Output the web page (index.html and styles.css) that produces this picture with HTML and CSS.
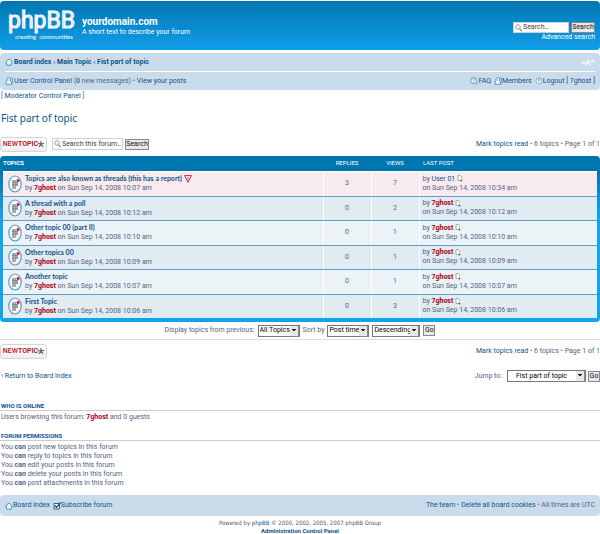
FILE: index.html
```
<!DOCTYPE html>
<html lang="en">
<head>
<meta charset="utf-8">
<title>yourdomain.com - Fist part of topic</title>
<link rel="stylesheet" href="styles.css">
</head>
<body>
<svg class="defs" aria-hidden="true">
  <symbol id="topic" viewBox="0 0 14 18"><ellipse cx="7" cy="9" rx="6.2" ry="8" fill="#f6fafc" stroke="#5b9cc6" stroke-width="1.2"/><path d="M4 5h4v2h2v4H8v3H4z" fill="#aaa"/><path d="M4 7.500h6M4 10h6" stroke="#777" stroke-width=".7"/><circle cx="10" cy="5.500" r="1.500" fill="#d31141"/></symbol>
  <symbol id="home" viewBox="0 0 8 8"><path d="M1 3.800 4 .8l3 3-.8 3.400H1.800z" fill="#eaf6fb" stroke="#3798c4"/></symbol>
  <symbol id="star" viewBox="0 0 6 6"><path d="M3 0v3M0 2.300l3 .7M6 2.300 3 3M1 6l2-3 2 3" stroke="#666" stroke-width="1.200" fill="none"/></symbol>
  <symbol id="lens" viewBox="0 0 8 8"><circle cx="3" cy="3" r="2.300" fill="#eef4f7" stroke="#8a9299" stroke-width=".8"/><path d="m4.600 4.800 2.200 2.400" stroke="#777" stroke-width="1.100"/></symbol>
  <symbol id="user" viewBox="0 0 8 8"><path d="M1 7.300V5l1-1V1.500l1-.8h1.500l1 .8V4l1 1v2.300z" fill="#eef6fa" stroke="#3f88b2" stroke-width=".8"/><path d="M5.500 1h1.800v6.300M3 3h1" fill="none" stroke="#3f88b2" stroke-width=".7"/></symbol>
  <symbol id="faq" viewBox="0 0 8 8"><circle cx="3.700" cy="3.500" r="3" fill="#edf6fa" stroke="#3f88b2" stroke-width=".8"/><path d="M2.700 2.600c.2-1.200 2-1 1.900 0 0 .8-.9.800-.9 1.500M3.700 5v.6M6 6l1.500 1.500" fill="none" stroke="#3f88b2" stroke-width=".7"/></symbol>
  <symbol id="power" viewBox="0 0 8 8"><circle cx="4" cy="4" r="3" fill="#f4f7f8" stroke="#789cae" stroke-width=".8"/><path d="M4 1.500v3" stroke="#557990"/></symbol>
  <symbol id="last" viewBox="0 0 6 7"><path d="M4.500 3V1.500L3.500.6H1v5h1.500" fill="#fff" stroke="#8d9599" stroke-width=".8"/><path d="M3 5.500h2M4 4.500l1.200 1L4 6.600" fill="none" stroke="#555" stroke-width=".8"/></symbol>
</svg>

<header class="headerbar">
  <a class="logo" href="#"><span class="logo-name">phpBB</span><span class="logo-tag"><span>creating</span><span>communities</span></span></a>
  <div class="site">
    <h1>yourdomain.com</h1>
    <p>A short text to describe your forum</p>
  </div>
  <form class="site-search">
    <div class="search">
      <label class="field"><svg><use href="#lens"/></svg><input type="text" value="Search…" aria-label="Search"></label>
      <button type="button" class="button">Search</button>
    </div>
    <a href="#">Advanced search</a>
  </form>
</header>

<nav class="navbar">
  <div class="bar crumbs">
    <div class="group"><svg class="icon"><use href="#home"/></svg><span><a href="#">Board index</a> ‹ <a href="#">Main Topic</a> ‹ <a href="#">Fist part of topic</a></span></div>
    <a href="#" class="fontsize" aria-label="Change font size"><svg viewBox="0 0 14 7"><path d="m.5 3 2 2 2-2M9.500 3l2-2 2 2M4.500 6.500 7 1.500l2.500 5M5.500 5h3" fill="none" stroke="#f4fafd" stroke-width="1.200"/></svg></a>
  </div>
  <div class="bar">
    <div class="group"><svg class="icon"><use href="#user"/></svg><span><a href="#">User Control Panel</a> (<b>0</b> new messages) • <a href="#">View your posts</a></span></div>
    <div class="group links">
      <a href="#"><svg class="icon"><use href="#faq"/></svg>FAQ</a>
      <a href="#"><svg class="icon"><use href="#user"/></svg>Members</a>
      <a href="#"><svg class="icon"><use href="#power"/></svg>Logout [ 7ghost ]</a>
    </div>
  </div>
</nav>

<main>
  <p class="moderator">[ <a href="#">Moderator Control Panel</a> ]</p>
  <h2><a href="#">Fist part of topic</a></h2>

  <div class="actions">
    <a href="#" class="newtopic"><span>NEW</span><b>TOPIC</b><svg><use href="#star"/></svg></a>
    <form class="search">
      <label class="field wide"><svg><use href="#lens"/></svg><input type="text" value="Search this forum…" aria-label="Search this forum"></label>
      <button type="button" class="button">Search</button>
    </form>
    <p class="pagination"><a href="#">Mark topics read</a> • 6 topics • Page 1 of 1</p>
  </div>

  <div class="forumbg">
    <table>
      <thead><tr><th class="col-topic">Topics</th><th class="col-num">Replies</th><th class="col-num">Views</th><th class="col-last">Last post</th></tr></thead>
      <tbody>
        <tr class="reported"><td><div class="topic"><svg><use href="#topic"/></svg><div><a class="title" href="#">Topics are also known as threads (this has a report)</a> <svg class="warn" viewBox="0 0 8 8"><path d="M.6.600h6.800L4 7.300z" fill="#fff" stroke="#c5283d"/><path d="M4 1.800v2M4 4.500v.9" stroke="#c5283d"/></svg><br>by <a class="admin" href="#">7ghost</a> on Sun Sep 14, 2008 10:07 am</div></div></td><td class="num">3</td><td class="num">7</td><td class="last">by <a href="#">User 01</a> <svg><use href="#last"/></svg><br>on Sun Sep 14, 2008 10:34 am</td></tr>
        <tr><td><div class="topic"><svg><use href="#topic"/></svg><div><a class="title" href="#">A thread with a poll</a><br>by <a class="admin" href="#">7ghost</a> on Sun Sep 14, 2008 10:12 am</div></div></td><td class="num">0</td><td class="num">2</td><td class="last">by <a class="admin" href="#">7ghost</a> <svg><use href="#last"/></svg><br>on Sun Sep 14, 2008 10:12 am</td></tr>
        <tr><td><div class="topic"><svg><use href="#topic"/></svg><div><a class="title" href="#">Other topic 00 (part II)</a><br>by <a class="admin" href="#">7ghost</a> on Sun Sep 14, 2008 10:10 am</div></div></td><td class="num">0</td><td class="num">1</td><td class="last">by <a class="admin" href="#">7ghost</a> <svg><use href="#last"/></svg><br>on Sun Sep 14, 2008 10:10 am</td></tr>
        <tr><td><div class="topic"><svg><use href="#topic"/></svg><div><a class="title" href="#">Other topics 00</a><br>by <a class="admin" href="#">7ghost</a> on Sun Sep 14, 2008 10:09 am</div></div></td><td class="num">0</td><td class="num">1</td><td class="last">by <a class="admin" href="#">7ghost</a> <svg><use href="#last"/></svg><br>on Sun Sep 14, 2008 10:09 am</td></tr>
        <tr><td><div class="topic"><svg><use href="#topic"/></svg><div><a class="title" href="#">Another topic</a><br>by <a class="admin" href="#">7ghost</a> on Sun Sep 14, 2008 10:07 am</div></div></td><td class="num">0</td><td class="num">1</td><td class="last">by <a class="admin" href="#">7ghost</a> <svg><use href="#last"/></svg><br>on Sun Sep 14, 2008 10:07 am</td></tr>
        <tr><td><div class="topic"><svg><use href="#topic"/></svg><div><a class="title" href="#">First Topic</a><br>by <a class="admin" href="#">7ghost</a> on Sun Sep 14, 2008 10:06 am</div></div></td><td class="num">0</td><td class="num">3</td><td class="last">by <a class="admin" href="#">7ghost</a> <svg><use href="#last"/></svg><br>on Sun Sep 14, 2008 10:06 am</td></tr>
      </tbody>
    </table>
  </div>

  <form class="display-options">
    <label for="st">Display topics from previous:</label>
    <span class="select all"><select id="st"><option>All Topics</option></select></span>
    <label for="sk">Sort by</label>
    <span class="select time"><select id="sk"><option>Post time</option></select></span>
    <span class="select order"><select aria-label="Sort direction"><option>Descending</option></select></span>
    <button type="button" class="button go">Go</button>
  </form>

  <div class="actions bottom">
    <a href="#" class="newtopic"><span>NEW</span><b>TOPIC</b><svg><use href="#star"/></svg></a>
    <p class="pagination"><a href="#">Mark topics read</a> • 6 topics • Page 1 of 1</p>
  </div>

  <div class="jump">
    <a href="#">‹ Return to Board index</a>
    <form>
      <label for="f">Jump to:</label>
      <span class="select forum"><select id="f"><option>Fist part of topic</option></select></span>
      <button type="button" class="button go">Go</button>
    </form>
  </div>

  <section>
    <h3>Who is online</h3>
    <p>Users browsing this forum: <a class="admin" href="#">7ghost</a> and 0 guests</p>
  </section>
  <section>
    <h3>Forum permissions</h3>
    <p>You <b>can</b> post new topics in this forum<br>You <b>can</b> reply to topics in this forum<br>You <b>can</b> edit your posts in this forum<br>You <b>can</b> delete your posts in this forum<br>You <b>can</b> post attachments in this forum</p>
  </section>
</main>

<footer>
  <div class="navbar foot">
    <div class="bar">
      <div class="group"><a href="#"><svg class="icon"><use href="#home"/></svg>Board index</a><a href="#"><svg class="icon" viewBox="0 0 8 8"><path d="M1 1.500h5.500v5.500H1z" fill="#fff" stroke="#27617f"/><path d="m2 3.500 1.500 2L7.500.5" fill="none" stroke="#105289" stroke-width="1.300"/></svg>Subscribe forum</a></div>
      <span><a href="#">The team</a> • <a href="#">Delete all board cookies</a> • All times are UTC</span>
    </div>
  </div>
  <p class="copyright">Powered by <a href="#">phpBB</a> © 2000, 2002, 2005, 2007 phpBB Group<br><a class="admin-panel" href="#">Administration Control Panel</a></p>
</footer>
</body>
</html>
```
FILE: styles.css
```
* { box-sizing: border-box; }
body {
  margin: 0;
  padding: 1px 0 0;
  font: 7px/9px Roboto, sans-serif;
  color: #536482;
  background: #fff;
}
h1, h2, h3, p { margin: 0; font-weight: normal; }
a { color: #105289; text-decoration: none; }
svg { flex: none; }
.defs { position: absolute; width: 0; height: 0; }
.icon { width: 8px; height: 8px; }
.admin { color: #a01; font-weight: bold; }

.headerbar {
  display: flex;
  min-height: 49px;
  padding: 0 5px 0 8px;
  border-radius: 4px;
  color: #fff;
  background: linear-gradient(#0076b1, #129eea);
}
.logo { display: flex; flex-direction: column; width: 68px; padding-top: 8px; color: #fff; }
.logo-name {
  font: 23px/24px Roboto, sans-serif;
  color: #d3dbe1;
  -webkit-text-stroke: 1px #fff;
}
.logo-tag { display: flex; gap: 3px; padding-left: 7px; font: 6px/8px Lato, sans-serif; }
.site { flex: 1; padding: 14px 0 0 6px; }
.site h1 { font: bold 10px/13px Roboto, sans-serif; }
.site-search { padding-top: 21px; text-align: right; }
.site-search a { color: #fff; }
.search { display: flex; gap: 2px; align-items: center; }
.field {
  display: flex;
  align-items: center;
  width: 56px;
  height: 11px;
  padding: 0 1px;
  background: #fff;
  border: 1px solid #c7d3da;
}
.field.wide { width: 71px; height: 12px; }
.field svg { width: 8px; height: 8px; }
.field input { flex: 1; min-width: 0; padding: 0; border: 0; outline: 0; background: none; font: inherit; color: #444; }
.button {
  min-width: 24px;
  height: 11px;
  padding: 0;
  border: 1px solid #888;
  background: #e9e9e9;
  font: inherit;
  line-height: 9px;
  color: #111;
}
.button.go { min-width: 12px; }

.navbar { margin-top: 3px; padding: 0 5px; border-radius: 4px; background: #cadceb; }
.bar { display: flex; justify-content: space-between; align-items: center; min-height: 18px; }
.bar.crumbs { border-bottom: 1px solid #fff; font-weight: bold; min-height: 19px; }
.group, .group a { display: flex; align-items: center; }
.group > svg { margin-right: 1px; }
.group span a { display: inline; }
.links, .foot .group { gap: 3px; }
.fontsize svg { display: block; width: 14px; height: 7px; }

.moderator { padding: 2px 0 0 1px; }
h2 { padding: 10px 0 9px 1px; font: 10px/15px "Noto Sans", sans-serif; }
.actions { display: flex; align-items: center; gap: 5px; height: 18px; }
.newtopic {
  display: flex;
  align-items: center;
  justify-content: center;
  width: 47px;
  height: 15px;
  border: 1px solid #d5d5d5;
  border-radius: 3px;
  background: linear-gradient(#fff, #eee);
  color: #b7142e;
}
.newtopic span { font-weight: 500; }
.newtopic svg { width: 6px; height: 6px; }
.pagination { margin-left: auto; }

.forumbg {
  margin-top: 3px;
  padding: 0 3px 4px;
  border-radius: 4px;
  background: linear-gradient(#0076b1 15px, #12a3eb 60px);
}
table { width: 100%; border-collapse: collapse; table-layout: fixed; }
th { height: 15px; padding: 0; font: 6px/8px Roboto, sans-serif; text-transform: uppercase; color: #fff; }
th.col-topic { text-align: left; font-weight: bold; }
.col-num { width: 48px; }
.col-last { width: 178px; }
th.col-last { padding-left: 4px; text-align: left; }
td { height: 25px; padding: 0; border-top: 1px solid #fff; border-bottom: 1px solid #5f9fc4; background: #ecf3f7; }
tr:nth-child(even) td { height: 24px; background: #e1ebf2; }
tr:last-child td { background: #e1ebf2; border-bottom: 0; }
tr.reported td { background: #f7ebef; }
td + td { border-left: 1px solid #fff; }
.topic { display: flex; align-items: center; gap: 3px; padding-left: 5px; }
.topic > svg { width: 14px; height: 18px; }
.title { font: bold 7px/9px Lato, sans-serif; }
.warn { width: 8px; height: 8px; vertical-align: middle; }
.num { text-align: center; }
td.last { padding-left: 3px; }
.last svg { width: 6px; height: 7px; vertical-align: middle; }

.display-options { display: flex; align-items: center; justify-content: center; gap: 3px; height: 18px; border-bottom: 1px solid #ddd; }
.select { position: relative; display: flex; height: 12px; }
.select select {
  appearance: none;
  width: 100%;
  padding: 0 1px;
  border: 1px solid #777;
  border-radius: 0;
  background: #fff;
  font: inherit;
  color: #000;
}
.select::after {
  content: "";
  position: absolute;
  top: 1px;
  right: 1px;
  width: 8px;
  height: 10px;
  border: solid #888;
  border-width: 0 1px 1px 0;
  background: conic-gradient(from -45deg at 50% 70%, #222 90deg, #e7e7e7 0) center / 6px 4px no-repeat #e7e7e7;
}
.all, .time { width: 42px; }
.order { width: 48px; }
.forum { width: 79px; }
.forum select { padding-left: 8px; }
.bottom { margin-top: 2px; }
.jump, .jump form { display: flex; align-items: center; justify-content: space-between; }
.jump { height: 32px; padding-left: 1px; }
.jump form { gap: 2px; }
.jump label { padding-right: 3px; }

section { padding-top: 10px; }
h3 { padding-left: 1px; border-bottom: 1px solid #ccc; font: bold 6px/8px Roboto, sans-serif; text-transform: uppercase; color: #115098; }
section p { padding: 2px 0 0 1px; }
.foot { margin-top: 7px; }
.foot .bar { min-height: 21px; }
.copyright { padding-top: 3px; text-align: center; font: 6px/8px "DejaVu Sans Condensed", sans-serif; color: #555; }
.admin-panel { font-family: Roboto, sans-serif; font-weight: bold; }
```
